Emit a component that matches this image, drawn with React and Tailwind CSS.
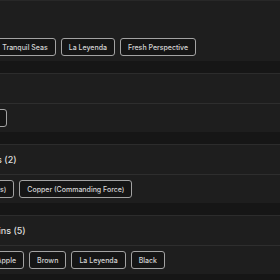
import React from 'react';

const sections = [
    { title: null, tags: ['Wild Rose', 'Tranquil Seas', 'La Leyenda', 'Fresh Perspective'] },
    { title: 'Sizes (1)', tags: ['Original Edition'] },
    { title: 'Limited Colors (2)', tags: ['Gold (Hazy Days)', 'Copper (Commanding Force)'] },
    { title: 'Supported Skins (5)', tags: ['Bamboo', 'Apple', 'Brown', 'La Leyenda', 'Black'] },
];

const Tag = ({ label }) => (
    <span className="h-[18px] px-[7px] flex items-center rounded-[3px] border border-[#a3a3a3] bg-[#151515] text-[7px] leading-none font-medium text-[#d6d6d6] whitespace-nowrap">
        {label}
    </span>
);

const App = () => {
    return (
        <div className="w-[280px] h-[280px] overflow-hidden bg-[#161616] font-['Inter',sans-serif]">
            <div className="-ml-[60px] w-[380px] flex flex-col gap-[12px]">
                {sections.map((s, i) => (
                    <section key={i} className={`bg-[#1e1e1e] ${s.title ? 'border-t border-[#2c2c2c]' : ''}`}>
                        {s.title && (
                            <header className="h-[30px] flex items-center border-b border-[#2e2e2e] text-[9px] font-medium text-[#dedede]">
                                {s.title}
                            </header>
                        )}
                        <div className={`flex flex-wrap gap-[5px] pb-[5px] ${s.title ? 'pt-[5px]' : 'pt-[37px] border-t border-[#282828]'}`}>
                            {s.tags.map(t => <Tag key={t} label={t} />)}
                        </div>
                    </section>
                ))}
            </div>
        </div>
    );
};

export default App;
